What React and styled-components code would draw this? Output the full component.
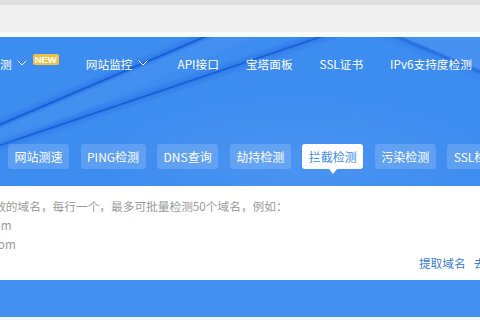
import React from 'react'
import styled, { createGlobalStyle } from 'styled-components'
import { ChevronDown } from 'lucide-react'

const NAV_ITEMS = [
  { label: '域名检测', menu: true, badge: 'NEW' },
  { label: '网站监控', menu: true },
  { label: 'API接口' },
  { label: '宝塔面板' },
  { label: 'SSL证书' },
  { label: 'IPv6支持度检测' },
]

const TABS = ['网站测速', 'PING检测', 'DNS查询', '劫持检测', '拦截检测', '污染检测', 'SSL检测']
const ACTIVE_TAB = '拦截检测'

const HINT_LINES = [
  '请输入有效的域名，每行一个，最多可批量检测50个域名，例如：',
  'www.a.com',
  'www.jd.com',
]

const GlobalStyle = createGlobalStyle`
  html, body {
    margin: 0;
    padding: 0;
    background: #fff;
  }
  body {
    width: 480px;
    height: 320px;
    overflow: hidden;
    font-family: "Noto Sans CJK SC", "Noto Sans", sans-serif;
  }
`

const Page = styled.div`
  width: 480px;
  display: flex;
  flex-direction: column;
  overflow: hidden;
`

const TopStrip = styled.div`
  height: 5px;
  background: #dedede;
`

const TopBar = styled.div`
  height: 27px;
  background: #f0f0f0;
`

const TopGap = styled.div`
  height: 5px;
  background: #f7fbfb;
`

// blue banner with the folded-paper diagonal lines
const Header = styled.header`
  height: 149px;
  box-sizing: border-box;
  padding-bottom: 17px;
  display: flex;
  flex-direction: column;
  background-color: #3d8cf0;
  background-image:
    linear-gradient(156.8deg, transparent 73px, rgba(12, 80, 215, 0.24) 79px, rgba(8, 70, 205, 0.8) 80.6px, rgba(12, 80, 215, 0.22) 82px, rgba(255, 255, 255, 0.03) 85px, rgba(255, 255, 255, 0.03) 100px, transparent 101px),
    linear-gradient(161.35deg, transparent 95px, rgba(12, 80, 215, 0.24) 101px, rgba(8, 70, 205, 0.75) 102.5px, rgba(12, 80, 215, 0.2) 104px, transparent 110px),
    linear-gradient(202.86deg, rgba(255, 255, 255, 0.05) 29px, rgba(8, 70, 205, 0.45) 32px, rgba(12, 80, 215, 0.12) 35px, transparent 42px),
    radial-gradient(ellipse 60% 70% at 62% 85%, rgba(255, 255, 255, 0.07), transparent 70%);
`

const NavBar = styled.nav`
  height: 52px;
  margin-left: -35px;
  display: flex;
  align-items: center;
  gap: 27px;
  color: #fff;
  font-size: 11.7px;
  white-space: nowrap;
`

const NavItem = styled.div`
  display: flex;
  align-items: center;
  flex-shrink: 0;
`

const NavChevron = styled(ChevronDown)`
  margin-left: 2px;
  flex-shrink: 0;
`

const NewBadge = styled.span`
  margin-left: 3px;
  margin-bottom: 7px;
  width: 26px;
  height: 11px;
  border-radius: 2px;
  background: #ecc24a;
  color: #fff;
  font-family: "Liberation Sans", Arial, sans-serif;
  font-size: 9.5px;
  font-weight: 700;
  line-height: 11px;
  text-align: center;
`

const TabRow = styled.div`
  margin-top: 55px;
  padding-left: 8px;
  display: flex;
  gap: 11.5px;
`

const Tab = styled.div`
  position: relative;
  flex-shrink: 0;
  height: 25px;
  padding: 0 6.5px;
  border-radius: 3px;
  font-size: 12px;
  line-height: 25px;
  white-space: nowrap;
  color: ${(props) => (props.active ? '#3d8cf0' : '#fff')};
  background: ${(props) => (props.active ? '#fff' : 'rgba(255, 255, 255, 0.16)')};

  &::after {
    content: '';
    display: ${(props) => (props.active ? 'block' : 'none')};
    position: absolute;
    left: 50%;
    bottom: -5px;
    margin-left: -4px;
    border-left: 4px solid transparent;
    border-right: 4px solid transparent;
    border-top: 5px solid #fff;
  }
`

const Panel = styled.section`
  background: #fff;
  overflow: hidden;
`

const PanelInner = styled.div`
  width: 620px;
  margin-left: -52.6px;
  padding: 10px 0 8px;
  font-size: 11.7px;
  line-height: 19px;
`

const HintLine = styled.div`
  color: #999;
  white-space: nowrap;
`

const LinkRow = styled.div`
  display: flex;
  justify-content: flex-end;
  gap: 8px;
  padding-right: 47px;
  white-space: nowrap;
`

const TextLink = styled.a`
  color: #3a7cd6;
  text-decoration: none;
  cursor: pointer;
`

const BottomBand = styled.div`
  height: 37px;
  background: #4290f0;
`

const BottomEdge = styled.div`
  height: 3px;
  background: #f3f7fb;
`

export default function App() {
  return (
    <>
      <GlobalStyle />
      <Page>
        <TopStrip />
        <TopBar />
        <TopGap />
        <Header>
          <NavBar>
            {NAV_ITEMS.map((item) => (
              <NavItem key={item.label}>
                <span>{item.label}</span>
                {item.menu && <NavChevron size={16} strokeWidth={1.5} />}
                {item.badge && <NewBadge>{item.badge}</NewBadge>}
              </NavItem>
            ))}
          </NavBar>
          <TabRow>
            {TABS.map((tab) => (
              <Tab key={tab} active={tab === ACTIVE_TAB}>
                {tab}
              </Tab>
            ))}
          </TabRow>
        </Header>
        <Panel>
          <PanelInner>
            {HINT_LINES.map((line) => (
              <HintLine key={line}>{line}</HintLine>
            ))}
            <LinkRow>
              <TextLink>提取域名</TextLink>
              <TextLink>去除重复</TextLink>
            </LinkRow>
          </PanelInner>
        </Panel>
        <BottomBand />
        <BottomEdge />
      </Page>
    </>
  )
}
